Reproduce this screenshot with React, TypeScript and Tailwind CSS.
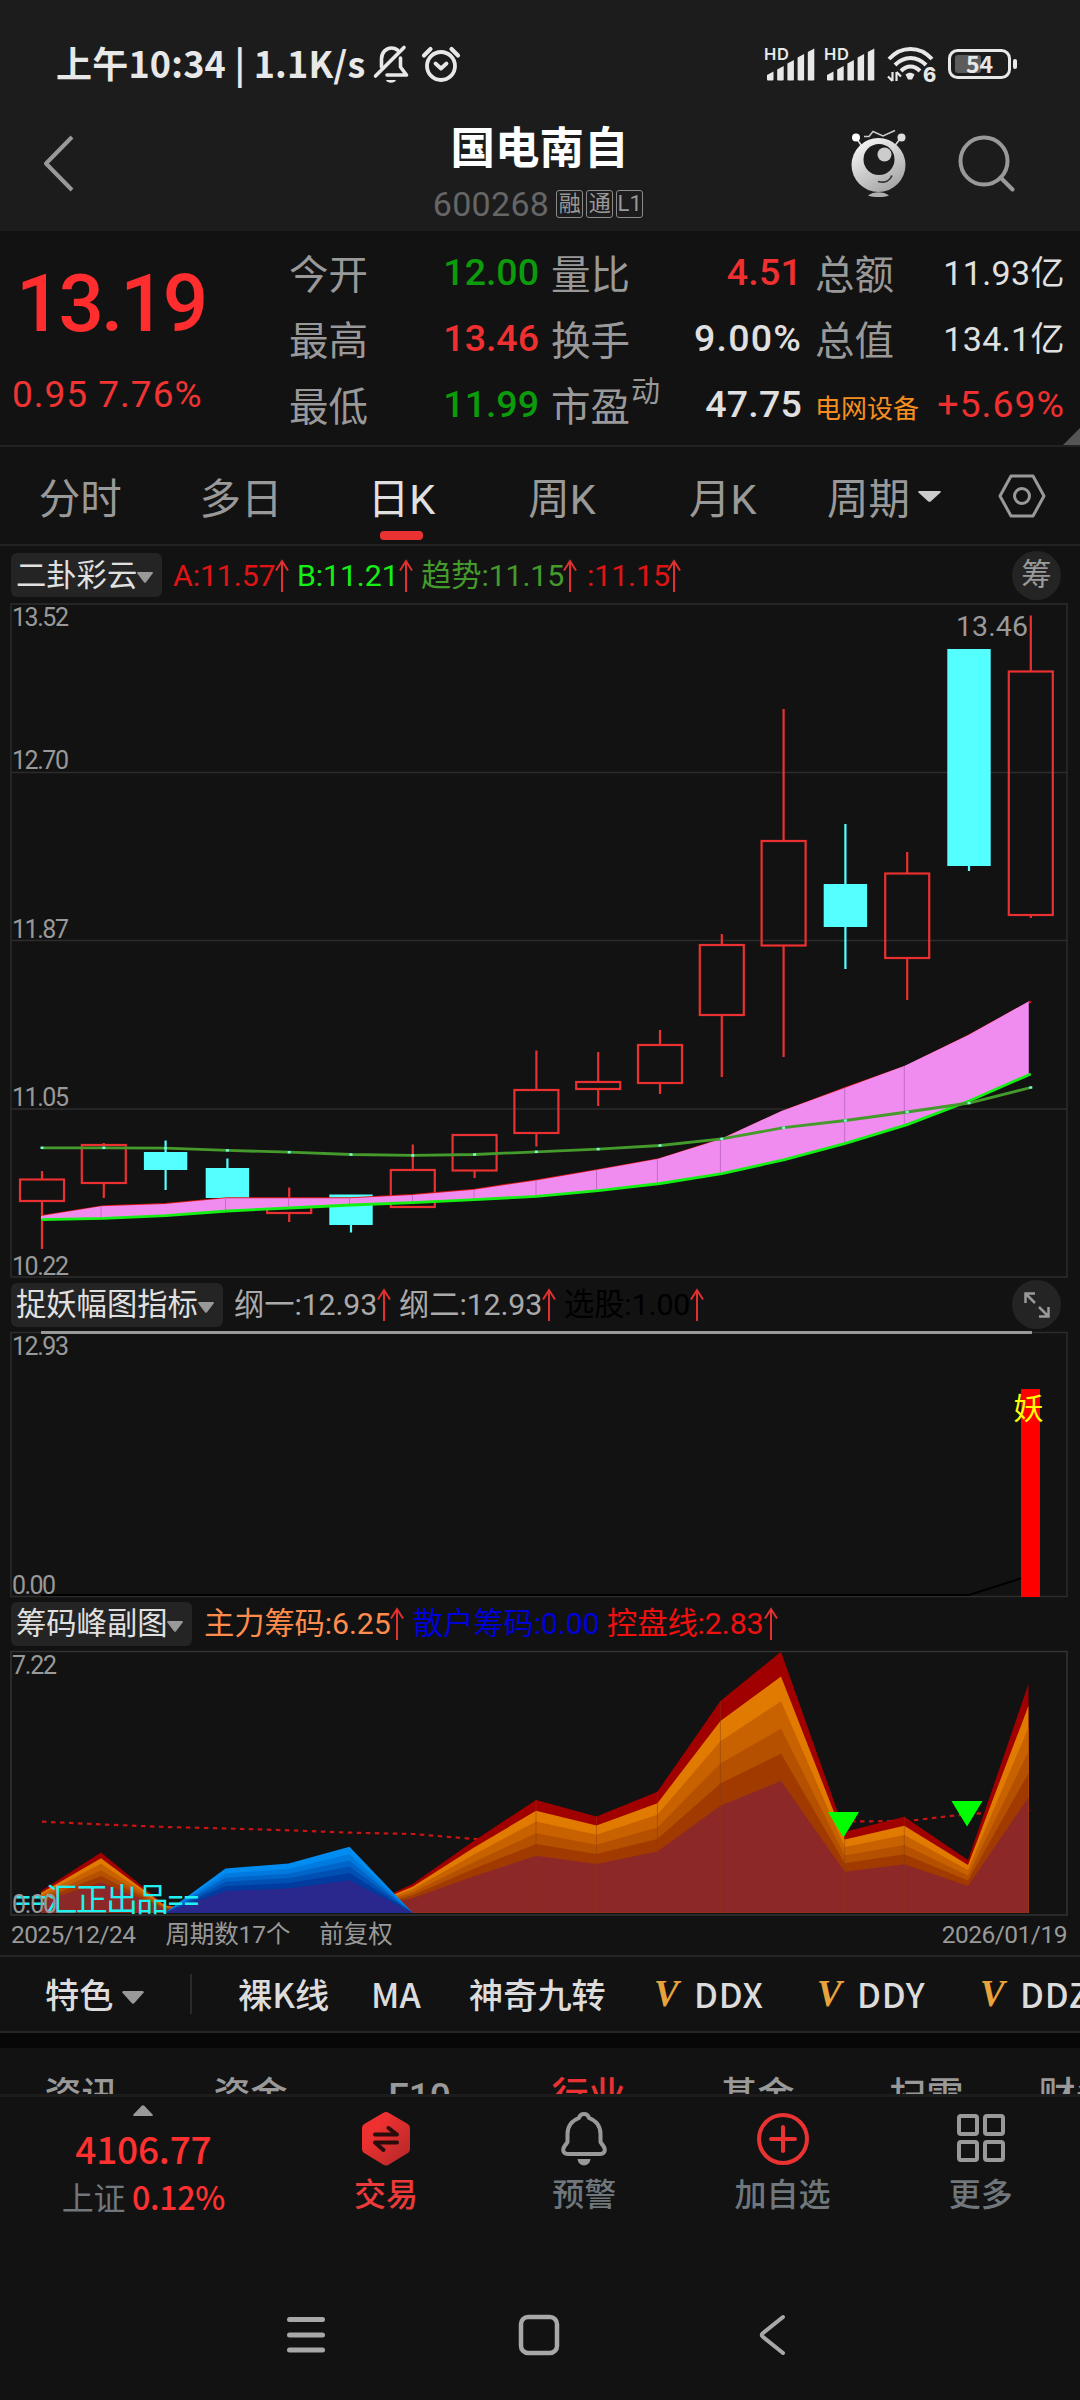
import React from 'react';
import clsx from 'clsx';

interface Candle {
  high: number;
  top: number;
  bottom: number;
  low: number;
  up: boolean;
}

const START_X = 42;
const STEP = 61.8;

const candles: Candle[] = [
  { high: 1171, top: 1179.5, bottom: 1201, low: 1249, up: true },
  { high: 1143, top: 1145, bottom: 1183, low: 1198, up: true },
  { high: 1140.5, top: 1152, bottom: 1170, low: 1190, up: false },
  { high: 1158.5, top: 1168, bottom: 1198, low: 1198, up: false },
  { high: 1187.5, top: 1203, bottom: 1213, low: 1222, up: true },
  { high: 1194.5, top: 1194.5, bottom: 1225, low: 1232.5, up: false },
  { high: 1144.5, top: 1170, bottom: 1207, low: 1207, up: true },
  { high: 1135, top: 1135, bottom: 1170.5, low: 1178, up: true },
  { high: 1050.5, top: 1090, bottom: 1133, low: 1146.5, up: true },
  { high: 1052, top: 1082, bottom: 1089, low: 1106, up: true },
  { high: 1030, top: 1045, bottom: 1083, low: 1094, up: true },
  { high: 934, top: 945, bottom: 1015, low: 1077, up: true },
  { high: 709, top: 841, bottom: 945.5, low: 1057, up: true },
  { high: 824, top: 884, bottom: 927, low: 969, up: false },
  { high: 852, top: 873.5, bottom: 958, low: 1000, up: true },
  { high: 649, top: 649, bottom: 866, low: 871, up: false },
  { high: 615.5, top: 671.5, bottom: 915, low: 918, up: true },
];

const trend = [1147.8, 1147.8, 1148.2, 1150.4, 1152.2, 1154.5, 1155.4, 1154.5, 1151.8, 1149.1, 1145.5, 1138.8, 1127.7, 1120.5, 1112, 1103, 1087.5];
const lineA = [1216, 1206.3, 1204, 1198.2, 1198.2, 1198.2, 1195, 1189.7, 1180.4, 1170, 1159, 1139.3, 1111.2, 1088, 1066, 1035.3, 1001.5];
const lineB = [1219.6, 1218.3, 1215.6, 1211, 1208, 1205, 1202.7, 1199.6, 1196.4, 1190.6, 1183.5, 1173.7, 1159.8, 1143.3, 1124.6, 1101, 1074];

// filled areas snap to their own x grid
const areaX = [41, 101, 165, 225.5, 288.6, 349.5, 412.5, 474, 536, 596.5, 657.4, 720.4, 781, 844.7, 904.3, 968, 1028.5];
const mainChips = [21.7, 60.3, 7.7, 0, 0, 0, 28.7, 72, 112.7, 96.3, 121, 211.7, 261, 81, 96, 52.7, 228.7];
const retailChips = [0, 0, 0, 44.3, 49.3, 66, 0, 0, 0, 0, 0, 0, 0, 0, 0, 0, 0];
const control = [1821.7, 1824.5, 1827, 1828.5, 1830.3, 1832.7, 1834, 1839, 1839, 1837, 1835, 1832, 1827, 1821.5, 1821, 1814, 1810.5];

const warmLayers = [
  [1, '#a00000'],
  [0.905, '#e07a00'],
  [0.81, '#c86200'],
  [0.705, '#b45000'],
  [0.61, '#a03a00'],
  [0.505, '#8c2828'],
] as const;

const coldLayers = [
  [1, '#008cf0'],
  [0.885, '#007ade'],
  [0.79, '#0064c8'],
  [0.7, '#0050b4'],
  [0.6, '#003ca0'],
  [0.49, '#2a288c'],
] as const;

const cx = (i: number) => START_X + i * STEP;
const linePoints = (ys: number[]) => ys.map((y, i) => `${cx(i)},${y}`).join(' ');

const UI = "font-[Roboto,'Noto_Sans_CJK_SC',sans-serif]";

function StatusBar() {
  return (
    <div className="h-[128px] flex items-center pl-[56px] pr-[62px] text-[#e8e8e8] font-['Noto_Sans_CJK_SC',sans-serif]">
      <span className="w-[316px] mt-[-5px] text-[36px] leading-none font-bold whitespace-nowrap tracking-[0.2px]">上午10:34 | 1.1K/s</span>
      <svg className="w-[38px] h-[40px]" viewBox="0 0 38 40" fill="none" stroke="#e8e8e8" strokeWidth="3.6" strokeLinecap="round" strokeLinejoin="round">
        <path d="M9.5 23V15c0-6 4-11 10-11 2.500 0 4.500.8 6 2" />
        <path d="M28.500 14v9l6 8H15" />
        <path d="M3.500 32 32 3.500" />
        <path d="M14 36h10c-1 3.500-9 3.500-10 0z" fill="#e8e8e8" stroke="none" />
      </svg>
      <svg className="w-[40px] h-[40px] ml-[11px]" viewBox="0 0 40 40" fill="none" stroke="#e8e8e8" strokeWidth="3.8" strokeLinecap="round" strokeLinejoin="round">
        <circle cx="20" cy="22" r="14" />
        <path d="m14.500 19.500 5.500 5 5.500-5" />
        <path d="M3 11.500 9.500 5M30.500 5l6.500 6.500" strokeWidth="4.200" />
      </svg>
      <div className="ml-auto flex items-center">
        <Signal />
        <Signal />
        <svg className="w-[50px] h-[38px] mr-[12px] overflow-visible" viewBox="0 0 50 38" fill="none" stroke="#e8e8e8" strokeWidth="4">
          <path d="M3 14c12-13.500 31-13.500 43 0" />
          <path d="M9 20c9-9.500 22-9.500 31 0" />
          <path d="M15 26c6-6 13-6 19 0" />
          <path d="M19.500 29.500c3-2.500 6-2.500 9 0l-2.500 5h-4z" fill="#e8e8e8" stroke="none" />
          <path d="M6.500 27v9M10.500 36v-9M6.500 36 2 31.500M10.500 27l4.500 4.500" strokeWidth="2.200" />
          <text x="37" y="36.500" fontSize="20" fontWeight="800" fill="#e8e8e8" stroke="none" fontFamily="Inter">6</text>
        </svg>
        <svg className="w-[70px] h-[30px] overflow-visible" viewBox="0 0 70 30">
          <rect x="1.500" y="1.500" width="60" height="27" rx="8" fill="none" stroke="#e8e8e8" strokeWidth="3" />
          <rect x="7" y="6" width="26" height="18" rx="3" fill="#5c5c5c" />
          <rect x="65" y="10" width="4" height="10" rx="2" fill="#e8e8e8" />
          <text x="31.500" y="23.500" fontSize="23" fontWeight="700" fill="#e8e8e8" textAnchor="middle" fontFamily="'Noto Sans CJK SC'">54</text>
        </svg>
      </div>
    </div>
  );
}

function Signal() {
  return (
    <svg className="w-[50px] h-[34px] mr-[9.500px] relative left-[-2px] overflow-visible" viewBox="0 0 50 34" fill="#e8e8e8">
      <text x="-1" y="13" fontSize="16.500" fontWeight="600" fontFamily="Inter" textLength="25">HD</text>
      {[8, 13.5, 19.5, 25.5, 31].map((h, i) => (
        <path key={h} d={`M${2 + i * 10.2} ${33 - h + 3}l6.500-3.500v${h}q0 1-1 1h-4.500q-1 0-1-1z`} />
      ))}
    </svg>
  );
}

function TitleBar() {
  return (
    <div className="h-[103px] flex">
      <svg className="w-[36px] h-[60px] ml-[40px] mt-[5px]" viewBox="0 0 36 60" fill="none" stroke="#999" strokeWidth="4" strokeLinejoin="round">
        <path d="M32 4 6 30.500 32 57" />
      </svg>
      <div className="w-[240px] ml-[342px] mr-[190px] flex flex-col items-center">
        <h1 className="mt-[-1px] ml-[3px] text-[44.500px] leading-[44px] font-bold text-white whitespace-nowrap">国电南自</h1>
        <div className="mt-[16px] flex items-center gap-[3px] text-[#999]">
          <span className="mr-[4px] text-[34px] leading-none tracking-[0.3px] text-[#666]">600268</span>
          {['融', '通', 'L1'].map((tag) => (
            <span key={tag} className="w-[27px] h-[28px] border border-[#8a8a8a] rounded-[3px] flex items-center justify-center text-[22px] leading-none">
              {tag}
            </span>
          ))}
        </div>
      </div>
      <div className="flex w-[232px]">
        <svg className="w-[60px] h-[70px] mt-[1px]" viewBox="0 0 60 70">
          <defs>
            <linearGradient id="alien" x1="0" y1="0" x2="0.6" y2="1">
              <stop offset="0" stopColor="#fff" />
              <stop offset="1" stopColor="#a8a8a8" />
            </linearGradient>
          </defs>
          <path d="m9 10 6 9M52 10l-7 9" stroke="#ddd" strokeWidth="1.600" />
          <circle cx="8" cy="8.500" r="4" fill="#fff" />
          <circle cx="53.500" cy="8.500" r="4" fill="#ddd" />
          <path d="M16 7.500h5l4-5 10 4.500 12-5.500" fill="none" stroke="#ccc" strokeWidth="1.500" />
          <circle cx="30.500" cy="36" r="27" fill="url(#alien)" />
          <circle cx="31" cy="30.500" r="15.500" fill="#1c1c1c" />
          <circle cx="36.500" cy="25.500" r="7" fill="#ccc" />
          <path d="M30 52.500c7 2 12-1 14-6" fill="none" stroke="#333" strokeWidth="1.800" />
          <path d="M20 66.500c5-4.500 16-4.500 21 0-5 2-16 2-21 0z" fill="#b0b0b0" />
        </svg>
        <svg className="w-[60px] h-[60px] mt-[6px] ml-[47px]" viewBox="0 0 60 60" fill="none" stroke="#999" strokeWidth="4">
          <circle cx="29" cy="27" r="23.500" />
          <path d="m45.500 43.500 12 12" strokeLinecap="round" />
        </svg>
      </div>
    </div>
  );
}

function QuoteRow({ items }: { items: React.ReactNode[] }) {
  return (
    <div className="h-[66px] flex items-center text-[39.500px] leading-none whitespace-nowrap">
      <div className="w-[120px] pt-[5px] text-[#999]">{items[0]}</div>
      <div className="w-[130px] text-right tracking-[0px] text-[37.500px] font-medium">{items[1]}</div>
      <div className="w-[113px] pt-[5px] ml-[12px] text-[#999]">{items[2]}</div>
      <div className="w-[138px] text-right tracking-[0.2px] text-[37.500px] font-medium text-[#e0e0e0]">{items[3]}</div>
      <div className="w-[108px] pt-[5px] ml-[13px] text-[#999]">{items[4]}</div>
      <div className="w-[142px] text-right tracking-[0.4px] text-[34px] text-[#e0e0e0]">{items[5]}</div>
    </div>
  );
}

function Quote() {
  return (
    <div className="relative h-[216px] flex border-b-2 border-[#222] bg-[#121212]">
      <div className="w-[289px] pl-[12px] text-[#ff2d2d] whitespace-nowrap">
        <div className="mt-[32px] ml-[4px] text-[80px] leading-[82px] font-medium tracking-[-3px]">13.19</div>
        <div className="mt-[32px] text-[37px] leading-[36px] tracking-[1px] text-[#f03434]">0.95 7.76%</div>
      </div>
      <div className="pt-[9px]">
        <QuoteRow
          items={['今开', <span className="text-[#0c9b0c]">12.00</span>, '量比', <span className="text-[#f03030]">4.51</span>, '总额', '11.93亿']}
        />
        <QuoteRow
          items={['最高', <span className="text-[#f03030]">13.46</span>, '换手', <span className="tracking-[1.200px]">9.00%</span>, '总值', '134.1亿']}
        />
        <QuoteRow
          items={[
            '最低',
            <span className="text-[#0c9b0c]">11.99</span>,
            <span className="flex">
              市盈<span className="text-[29px] mt-[-10px] ml-[1px]">动</span>
            </span>,
            '47.75',
            <span className="text-[26px] relative top-[-3px] text-[#f58e1e]">电网设备</span>,
            <span className="text-[37.500px] tracking-[1px] text-[#f03030]">+5.69%</span>,
          ]}
        />
      </div>
      <div className="absolute right-0 bottom-0 w-[17px] h-[17px] bg-[#555] [clip-path:polygon(100%_0,100%_100%,0_100%)]" />
    </div>
  );
}

function Caret({ className }: { className?: string }) {
  return (
    <svg className={className} viewBox="0 0 24 14" preserveAspectRatio="none" fill="currentColor">
      <path d="M1.500 0h21q2 .5 1 2L13.500 13q-1.500 1.500-3 0L.5 2Q-.5.5 1.500 0z" />
    </svg>
  );
}

function PeriodTabs() {
  const tabs = ['分时', '多日', '日K', '周K', '月K'];
  return (
    <div className="h-[99px] flex items-center border-b-2 border-[#222] text-[41.500px] text-[#999] leading-none">
      {tabs.map((tab) => (
        <div key={tab} className={clsx('relative w-[160.600px] h-full flex items-center justify-center whitespace-nowrap pt-[9px]', tab === '日K' && 'text-[#e0e0e0]')}>
          {tab}
          {tab === '日K' && <div className="absolute bottom-[4px] left-[59px] w-[43px] h-[9px] rounded-[4px] bg-[#ea3232]" />}
        </div>
      ))}
      <div className="ml-[24px] w-[91px] pt-[9px]">周期</div>
      <Caret className="w-[23px] h-[11px] mt-[1px] text-[#ccc]" />
      <svg className="w-[48px] h-[44px] ml-[57px] mt-[1px]" viewBox="0 0 48 44" fill="none" stroke="#999" strokeWidth="3" strokeLinejoin="round">
        <path d="M13 2h22l11 20-11 20H13L2 22z" />
        <circle cx="24" cy="22" r="7.500" />
      </svg>
    </div>
  );
}

function UpArrow() {
  return (
    <svg className="w-4 h-[34px] shrink-0 mt-[1px]" viewBox="0 0 16 34" fill="none" stroke="#e03030" strokeWidth="2">
      <path d="M8 33V2M2 11.500 8 2l6 9.500" />
    </svg>
  );
}

function Legend({ name, pill, height, children, action }: { name: string; pill: string; height: string; children: React.ReactNode; action?: React.ReactNode }) {
  return (
    <div className={clsx('flex items-center pl-[11px] pr-[19px] text-[30.300px] leading-none whitespace-nowrap', height)}>
      <div className={clsx('h-[44px] rounded-[6px] bg-[#242424] text-[#e0e0e0] flex items-center justify-between pl-[5px] pr-[9px]', pill)}>
        <span className="pt-[2px]">{name}</span>
        <Caret className="w-[16px] h-[11px] shrink-0 mt-[5px] ml-[-2px] text-[#999]" />
      </div>
      {children}
      {action && <div className="ml-auto w-[49px] h-[49px] rounded-full bg-[#242424] text-[#999] flex items-center justify-center">{action}</div>}
    </div>
  );
}

function LegendItem({ className, text, arrow = true }: { className: string; text: string; arrow?: boolean }) {
  return (
    <div className="flex items-center">
      <span className={clsx('pt-[2px] tracking-[-0.1px]', className)}>{text}</span>
      {arrow && <UpArrow />}
    </div>
  );
}

function AxisText({ y, children, width = 57 }: { y: number; children: string; width?: number }) {
  return (
    <text x="12" y={y + 9} fontSize="25" textLength={width} fill="#999">
      {children}
    </text>
  );
}

function CandleChart() {
  const fillTop = lineA.map((y, i) => `${areaX[i]},${y}`);
  const fillBottom = lineB.map((y, i) => `${areaX[i]},${y}`).reverse();

  return (
    <svg className="block w-[1080px] h-[673px] overflow-visible" viewBox="0 604 1080 673">
      <g stroke="#2c2c2c" strokeWidth="1.500" fill="none">
        <rect x="11" y="604" width="1056" height="673" />
        <path d="M11 772.500h1056M11 940.500h1056M11 1109h1056" />
      </g>
      <AxisText y={617}>13.52</AxisText>
      <AxisText y={760}>12.70</AxisText>
      <AxisText y={929}>11.87</AxisText>
      <AxisText y={1097}>11.05</AxisText>
      <AxisText y={1266}>10.22</AxisText>
      <text x="956" y="636" fontSize="28.500" textLength="72" fill="#999">13.46</text>

      {candles.map((c, i) => {
        const x = cx(i);
        const color = c.up ? '#ea3030' : '#54ffff';
        return (
          <g key={i} stroke={color} strokeWidth="2.200">
            <path d={`M${x} ${c.high}V${c.top}M${x} ${c.bottom}V${c.low}`} />
            {c.up ? (
              <rect x={x - 22} y={c.top} width="44" height={c.bottom - c.top} fill="none" />
            ) : (
              <rect x={x - 21.7} y={c.top} width="43.400" height={c.bottom - c.top} fill={color} stroke="none" />
            )}
          </g>
        );
      })}

      <polyline points={linePoints(lineA)} fill="none" stroke="#e01818" strokeWidth="2" />
      <polygon points={[...fillTop, ...fillBottom].join(' ')} fill="#f08cf0" />
      {areaX.map((x, i) => i > 0 && i !== 2 && i !== 12 && i !== 15 && (
        <path key={x} d={`M${x} ${lineA[i]}V${lineB[i]}`} stroke="#c46cc4" strokeWidth="1" />
      ))}
      <polyline points={linePoints(lineB)} fill="none" stroke="#14f014" strokeWidth="2.800" />
      <polyline points={linePoints(trend)} fill="none" stroke="#459a2c" strokeWidth="2.800" />
      {trend.map((y, i) => (
        <rect key={i} x={cx(i) - 1.5} y={y - 1.2} width="3" height="2.400" fill="#7affd8" />
      ))}
    </svg>
  );
}

function SignalChart() {
  return (
    <svg className="block w-[1080px] h-[264px] overflow-visible" viewBox="0 1332 1080 264">
      <rect x="11" y="1332.500" width="1056" height="264" fill="none" stroke="#2c2c2c" strokeWidth="1.500" />
      <path d="M41 1332.500h991" stroke="#999" strokeWidth="3" />
      <AxisText y={1346}>12.93</AxisText>
      <AxisText y={1585} width={44}>0.00</AxisText>
      <path d="M41 1595h928l53-17" fill="none" stroke="#000" strokeWidth="2.200" />
      <rect x="1021" y="1389" width="19" height="208" fill="#f00" />
      <text x="1028.500" y="1418.500" fontSize="30" fill="#ff0" textAnchor="middle">妖</text>
    </svg>
  );
}

function ChipChart() {
  const base = 1912.7;
  const area = (hs: number[], ratio: number) =>
    `${areaX[0]},${base} ` + hs.map((h, i) => `${areaX[i]},${base - h * ratio}`).join(' ') + ` ${areaX[16]},${base}`;

  return (
    <svg className="block w-[1080px] h-[264px] overflow-visible" viewBox="0 1651 1080 264">
      <rect x="11" y="1651.500" width="1056" height="263.500" fill="none" stroke="#333" strokeWidth="1.500" />
      <polyline points={linePoints(control)} fill="none" stroke="#c81414" strokeWidth="2.200" strokeDasharray="4.500 4.500" />
      {warmLayers.map(([ratio, color]) => (
        <polygon key={color} points={area(mainChips, ratio)} fill={color} />
      ))}
      {coldLayers.map(([ratio, color]) => (
        <polygon key={color} points={area(retailChips, ratio)} fill={color} />
      ))}
      {areaX.map((x, i) => [8, 9, 10, 11, 13, 14].includes(i) && (
        <path key={x} d={`M${x} ${base}V${base - mainChips[i]}`} stroke="#8a3a10" strokeWidth="1" opacity="0.45" />
      ))}
      <path d="M828 1812h31l-15.500 25.500zM951.500 1801h31l-15.500 25.500z" fill="#0f0" />
      <AxisText y={1665} width={45}>7.22</AxisText>
      <text x="14" y="1910.500" fontSize="32" fill="#20f2f2" textLength="186">==汇正出品==</text>
      <AxisText y={1903.5} width={45}>0.00</AxisText>
    </svg>
  );
}

function FeatureBar() {
  return (
    <div className="h-[78px] pb-[1px] flex items-center border-y-2 border-[#262626] font-['Noto_Sans_CJK_SC',sans-serif] text-[34.200px] leading-none font-medium text-[#dcdcdc] whitespace-nowrap overflow-hidden">
      <span className="ml-[45px] w-[77px] shrink-0">特色</span>
      <Caret className="w-[22px] h-[13px] mt-[7px] shrink-0 text-[#999]" />
      <div className="ml-[46px] w-[2px] h-[40px] shrink-0 bg-[#2a2a2a]" />
      <span className="ml-[46px] w-[133px] shrink-0">裸K线</span>
      <span className="w-[98px] shrink-0">MA</span>
      <span className="w-[185px] shrink-0">神奇九转</span>
      {['DDX', 'DDY', 'DDZ'].map((name) => (
        <span key={name} className="w-[163px] shrink-0 flex items-center">
          <span className="w-[40px] text-[37px] font-bold italic text-[#e8a33c] font-['Liberation_Serif',serif]">V</span>
          <span className="tracking-[0.8px]">{name}</span>
        </span>
      ))}
    </div>
  );
}

function InfoTabs() {
  const tabs = ['资讯', '资金', 'F10', '行业', '基金', '扫雷', '财务'];
  return (
    <div className="h-[46px] flex overflow-hidden whitespace-nowrap text-[37px] leading-[40px] font-medium text-[#999]">
      {tabs.map((tab, i) => (
        <div
          key={tab}
          className={clsx(
            'w-[169px] pt-[29px] shrink-0 text-center',
            i === 0 && 'ml-[-3px]',
            tab === '行业' && 'text-[#ea3232]',
            i === tabs.length - 1 && 'ml-[-20px]'
          )}
        >
          {tab}
        </div>
      ))}
    </div>
  );
}

function NavItem({ label, children, className }: { label: string; children: React.ReactNode; className?: string }) {
  return (
    <div className={clsx('w-[198.500px] flex flex-col items-center pt-[14px] text-[32px] leading-[40px] font-medium text-[#6f777c]', className)}>
      {children}
      <span className="mt-[5px]">{label}</span>
    </div>
  );
}

function BottomNav() {
  return (
    <div className="h-[156px] border-t-3 border-[#1c1c1c] flex font-['Noto_Sans_CJK_SC',sans-serif] whitespace-nowrap">
      <div className="w-[287px] flex flex-col items-center text-[#ff3030]">
        <Caret className="mt-[8px] w-[20px] h-[11px] rotate-180 text-[#999]" />
        <span className="mt-[13px] text-[37px] leading-[38px] font-medium tracking-[-0.2px]">4106.77</span>
        <span className="mt-[12px] text-[32px] leading-[34px] font-medium tracking-[-0.3px]">
          <span className="font-normal text-[#6f777c]">上证</span> 0.12%
        </span>
      </div>
      <NavItem label="交易" className="text-[#ea3a3a]">
        <svg className="w-[50px] h-[56px]" viewBox="0 0 50 56">
          <defs>
            <linearGradient id="trade" x1="0" y1="0" x2="1" y2="1">
              <stop offset="0.300" stopColor="#ee3030" />
              <stop offset="1" stopColor="#b02828" />
            </linearGradient>
          </defs>
          <path d="M22 2q3-2 6 0l18 10.500q3 1.500 3 5v20q0 3.500-3 5L28 53.500q-3 2-6 0L4 42.500q-3-1.500-3-5v-20q0-3.500 3-5z" fill="url(#trade)" />
          <path d="M14 23.500h22l-8.500-6.500M36 31.500H14l8.500 7.500" fill="none" stroke="#2a0c0c" strokeWidth="4" strokeLinecap="round" strokeLinejoin="round" />
        </svg>
      </NavItem>
      <NavItem label="预警">
        <svg className="w-[48px] h-[56px]" viewBox="0 0 48 56" fill="none" stroke="#999" strokeWidth="4" strokeLinejoin="round">
          <path d="M24 3c-3 0-4.500 2-5 4C11 10 7.500 16 7.500 23v8L4 36c-2 4 0 7 4 7h32c4 0 6-3 4-7l-3.500-5v-8c0-7-3.500-13-11.500-16-.5-2-2-4-5-4z" />
          <path d="M17.500 48h13c-1 8.500-12 8.500-13 0z" fill="#999" stroke="none" />
        </svg>
      </NavItem>
      <NavItem label="加自选">
        <svg className="w-[56px] h-[56px]" viewBox="0 0 56 56" fill="none" stroke="#ea3232" strokeWidth="4" strokeLinecap="round">
          <circle cx="28" cy="28" r="24" />
          <path d="M28 16v24M16 28h24" />
        </svg>
      </NavItem>
      <NavItem label="更多">
        <svg className="w-[50px] h-[56px]" viewBox="0 0 50 56" fill="none" stroke="#999" strokeWidth="4">
          <rect x="3" y="5" width="18" height="18" rx="2" />
          <rect x="29" y="5" width="18" height="18" rx="2" />
          <rect x="3" y="31" width="18" height="18" rx="2" />
          <rect x="29" y="31" width="18" height="18" rx="2" />
        </svg>
      </NavItem>
    </div>
  );
}

function SystemNav() {
  return (
    <div className="h-[150px] flex items-center pt-[20px]">
      <svg className="w-[38px] h-[40px] ml-[287px]" viewBox="0 0 38 40" stroke="#a8a8a8" strokeWidth="5" strokeLinecap="round">
        <path d="M2.500 4.500h33M2.500 20h33M2.500 35h33" />
      </svg>
      <svg className="w-[42px] h-[42px] ml-[193px]" viewBox="0 0 42 42" fill="none" stroke="#a8a8a8" strokeWidth="4.500">
        <rect x="3" y="3" width="36" height="36" rx="7" />
      </svg>
      <svg className="w-[28px] h-[42px] ml-[199px]" viewBox="0 0 28 42" fill="none" stroke="#a8a8a8" strokeWidth="4" strokeLinecap="round" strokeLinejoin="round">
        <path d="M24 3 3.500 19.500q-1.500 1.500 0 3L24 39" />
      </svg>
    </div>
  );
}

export default function App() {
  return (
    <div className={clsx('w-[1080px] h-[2400px] overflow-hidden bg-[#121212]', UI)}>
      <header className="bg-[#1c1c1c]">
        <StatusBar />
        <TitleBar />
      </header>
      <Quote />
      <PeriodTabs />

      <Legend name="二卦彩云" pill="w-[151px]" height="h-[58px]" action="筹">
        <LegendItem className="ml-[11px] w-[101px] text-[#e01414]" text="A:11.57" />
        <LegendItem className="ml-[7px] w-[101px] text-[#14f014]" text="B:11.21" />
        <LegendItem className="ml-[7px] w-[141px] text-[#459a2c]" text="趋势:11.15" />
        <LegendItem className="ml-[9px] w-[79px] text-[#e01414]" text=":11.15" />
      </Legend>
      <CandleChart />

      <Legend
        name="捉妖幅图指标"
        pill="w-[212px]"
        height="h-[55px]"
        action={
          <svg className="w-[26px] h-[26px]" viewBox="0 0 26 26" fill="none" stroke="#999" strokeWidth="2.500">
            <path d="M1.500 11V1.500H11M1.500 1.500l9.500 9.500M24.500 15v9.500H15M24.500 24.500 15 15" />
          </svg>
        }
      >
        <LegendItem className="ml-[11px] w-[142px] text-[#aaa]" text="纲一:12.93" />
        <LegendItem className="ml-[7px] w-[142px] text-[#aaa]" text="纲二:12.93" />
        <LegendItem className="ml-[7px] w-[125px] text-black" text="选股:1.00" />
      </Legend>
      <SignalChart />

      <Legend name="筹码峰副图" pill="w-[181px]" height="h-[55px]">
        <LegendItem className="ml-[12px] w-[185px] text-[#ff8c4c]" text="主力筹码:6.25" />
        <LegendItem className="ml-[8px] w-[186px] text-[#0000d8]" text="散户筹码:0.00" arrow={false} />
        <LegendItem className="ml-[8px] w-[156px] text-[#f01010]" text="控盘线:2.83" />
      </Legend>
      <ChipChart />

      <div className="h-[40px] pl-[11px] pr-[13px] flex items-center text-[24.500px] leading-none text-[#999]">
        <span className="tracking-[-0.6px]">2025/12/24</span>
        <span className="ml-[30px] tracking-[-0.1px]">周期数17个</span>
        <span className="ml-[29px]">前复权</span>
        <span className="ml-auto tracking-[-0.5px]">2026/01/19</span>
      </div>

      <FeatureBar />
      <div className="h-[15px] bg-[#070707]" />
      <InfoTabs />
      <BottomNav />
      <SystemNav />
    </div>
  );
}
